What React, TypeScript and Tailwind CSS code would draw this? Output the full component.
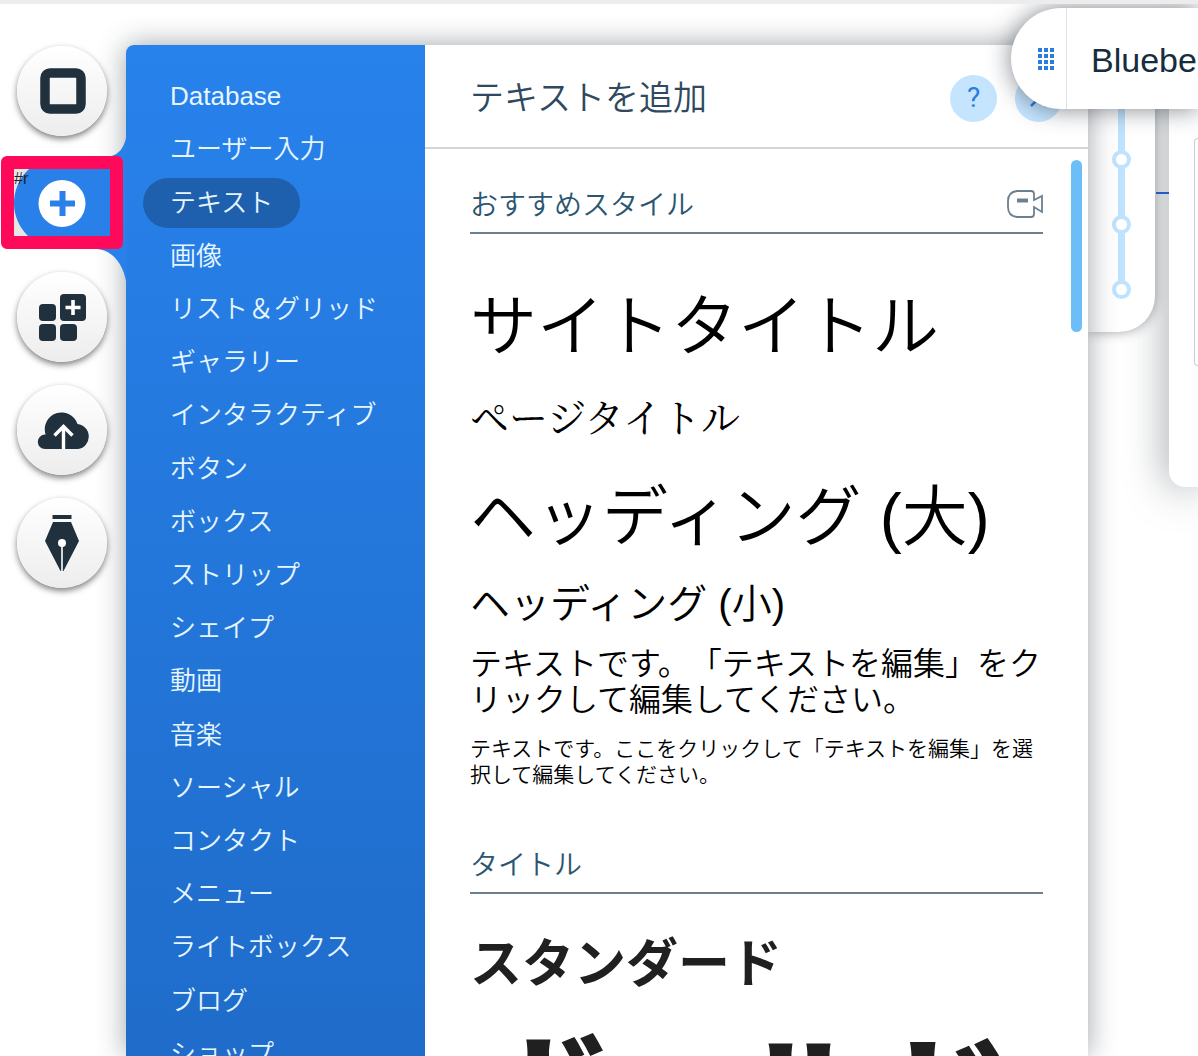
import type { ReactNode } from "react";

const JP = "font-['Liberation_Sans','Noto_Sans_CJK_JP',sans-serif]";

const categories = [
  "Database",
  "ユーザー入力",
  "テキスト",
  "画像",
  "リスト＆グリッド",
  "ギャラリー",
  "インタラクティブ",
  "ボタン",
  "ボックス",
  "ストリップ",
  "シェイプ",
  "動画",
  "音楽",
  "ソーシャル",
  "コンタクト",
  "メニュー",
  "ライトボックス",
  "ブログ",
  "ショップ",
];

function RoundButton({ label, children }: { label: string; children: ReactNode }) {
  return (
    <button
      aria-label={label}
      className="flex size-[90px] shrink-0 items-center justify-center rounded-full bg-linear-to-b from-white to-[#ededed] shadow-[0_3px_6px_rgba(0,0,0,0.5)]"
    >
      {children}
    </button>
  );
}

function Rail() {
  return (
    <nav aria-label="ツール" className="relative z-20 flex w-[126px] shrink-0 flex-col gap-[23px] pt-[46px] pl-[17px]">
      <RoundButton label="背景">
        <svg className="ml-0.5" width="46" height="46" viewBox="0 0 46 46" aria-hidden="true">
          <rect x="5" y="5" width="36" height="36" rx="5" fill="none" stroke="#20303c" strokeWidth="9.500" />
        </svg>
      </RoundButton>

      <button aria-label="追加" className="relative flex size-[90px] shrink-0 items-center justify-center">
        <svg
          className="absolute -top-[29px] -left-[17px]"
          width="127"
          height="168"
          viewBox="0 0 127 168"
          aria-hidden="true"
        >
          <rect x="8" y="36" width="40" height="74" fill="#e6e6e8" />
          <path d="M127 0C126 17 119 27 104 27H60A46 46 0 0 0 60 119H95C113 119 126 136 127 160Z" fill="#2880e8" />
        </svg>
        <svg className="relative" width="48" height="48" viewBox="0 0 48 48" aria-hidden="true">
          <circle cx="24" cy="23.500" r="23.500" fill="#fff" />
          <path d="M24.500 11v25M12 23.500h25" stroke="#2880e8" strokeWidth="6" />
        </svg>
      </button>

      <RoundButton label="アプリ">
        <svg width="48" height="48" viewBox="0 0 48 48" fill="#20303c" aria-hidden="true">
          <rect x="1" y="11" width="17" height="17" rx="4" />
          <rect x="1" y="31" width="17" height="17" rx="4" />
          <rect x="22" y="31" width="17" height="17" rx="4" />
          <rect x="22" y="1" width="26" height="27" rx="4" />
          <path d="M35 7v15M27.500 14.500h15" stroke="#fff" strokeWidth="3.600" />
        </svg>
      </RoundButton>

      <RoundButton label="アップロード">
        <svg className="ml-1" width="54" height="40" viewBox="0 0 54 40" aria-hidden="true">
          <path
            d="M8 39A7.200 7.200 0 0 1 8 24.600H8.600A16.500 16.500 0 0 1 40.500 14A12.600 12.600 0 0 1 41 39Z"
            fill="#20303c"
          />
          <path
            d="M26.500 39V17M17.500 25.500L26.500 16.500L35.500 25.500"
            fill="none"
            stroke="#fff"
            strokeWidth="3.400"
          />
        </svg>
      </RoundButton>

      <RoundButton label="ブログ">
        <svg width="36" height="58" viewBox="0 0 36 58" aria-hidden="true">
          <path d="M8.500 1h19v4h-19zM9 8h18l8 19L19.500 57h-3L1 27Z" fill="#20303c" />
          <circle cx="18" cy="29" r="4" fill="#fff" />
          <path d="M18 29v29" stroke="#fff" strokeWidth="1.600" />
        </svg>
      </RoundButton>

      <div className="absolute top-[156px] left-px z-10 h-[93px] w-[122px] rounded-md border-[13px] border-[#ff0a5b]">
        <span className="block text-base leading-5 text-[#222]">#r</span>
      </div>
    </nav>
  );
}

function CategoryMenu() {
  return (
    <aside className="w-[299px] shrink-0 rounded-tl-lg bg-linear-to-b from-[#2882ec] to-[#1f6cca] px-[17px] pt-[25px]">
      <ul className="grid h-[1011px] auto-rows-fr">
        {categories.map((name) => (
          <li key={name} className="flex items-center">
            <button
              className={
                name === "テキスト"
                  ? "h-[50px] rounded-full bg-[#1f60ae] px-[27px] text-[26px] font-[350] whitespace-nowrap text-[#e6f6ff]"
                  : "h-[50px] rounded-full px-[27px] text-[26px] font-[350] whitespace-nowrap text-[#e6f6ff]"
              }
            >
              {name}
            </button>
          </li>
        ))}
      </ul>
    </aside>
  );
}

function SectionHeading({ title, icon }: { title: string; icon?: ReactNode }) {
  return (
    <div className="flex h-[58px] items-center justify-between border-b-2 border-[#6c8090] text-[#2b5672]">
      <h2 className="pt-1 text-[28px] leading-[54px] font-[350]">{title}</h2>
      {icon}
    </div>
  );
}

function TextPanel() {
  return (
    <section className="relative min-w-0 flex-1 overflow-hidden bg-white">
      <header className="flex h-[104px] items-center justify-between border-b-2 border-[#d3d6d9] pt-1 pr-[26px] pl-[45px]">
        <h1 className="text-[34px] font-[350] text-[#2f4a60]">テキストを追加</h1>
        <div className="flex gap-[18px]">
          <button
            aria-label="ヘルプ"
            className="flex size-[47px] items-center justify-center rounded-full bg-[#c5e5ff] font-['Roboto',sans-serif] text-[28px] text-[#2b7be0]"
          >
            ?
          </button>
          <button aria-label="閉じる" className="flex size-[47px] items-center justify-center rounded-full bg-[#c5e5ff]">
            <svg width="18" height="18" viewBox="0 0 18 18" aria-hidden="true">
              <path d="M1 1L17 17M17 1L1 17" stroke="#2b7be0" strokeWidth="2.500" />
            </svg>
          </button>
        </div>
      </header>

      <div className="pt-[27px] pr-[45px] pl-[45px] text-black">
        <SectionHeading
          title="おすすめスタイル"
          icon={
            <button aria-label="動画を見る">
              <svg
                width="36"
                height="28"
                viewBox="0 0 36 28"
                fill="none"
                stroke="#6c8090"
                strokeWidth="1.800"
                aria-hidden="true"
              >
                <path d="M10 1H24Q27 1 27 4V10L35 6V22L27 17V24Q27 27 24 27H10Q1 26 1 17V11Q1 2 10 1Z" />
                <path d="M10 10.500H21" strokeWidth="4" />
              </svg>
            </button>
          }
        />
        <p className="mt-[53px] text-[67px] leading-[80px] font-[350] whitespace-nowrap">サイトタイトル</p>
        <p className="mt-7 font-['Noto_Serif_CJK_JP','Noto_Sans_CJK_JP',serif] text-[39px] leading-10 whitespace-nowrap">
          ページタイトル
        </p>
        <p className="mt-[42px] text-[66px] leading-[80px] font-[350] whitespace-nowrap">ヘッディング (大)</p>
        <p className="mt-[23px] text-[40px] leading-[48px] font-[350] whitespace-nowrap">ヘッディング (小)</p>
        <p className="mt-[18px] text-[32px] leading-9 font-[350] whitespace-nowrap [text-spacing-trim:space-all]">
          テキストです。「テキストを編集」をク
          <br />
          リックして編集してください。
        </p>
        <p className="mt-[18px] text-[21px] leading-[26px] font-[350] whitespace-nowrap [text-spacing-trim:space-all]">
          テキストです。ここをクリックして「テキストを編集」を選
          <br />
          択して編集してください。
        </p>

        <div className="mt-12">
          <SectionHeading title="タイトル" />
        </div>
        <p className="mt-10 text-[52px] leading-[60px] font-bold whitespace-nowrap text-[#202020]">スタンダード</p>
        <p className="mt-10 text-[135px] leading-[136px] font-black whitespace-nowrap text-[#202020]">ボールド</p>
      </div>

      <div className="absolute top-[115px] right-[6px] h-[172px] w-[11px] rounded-full bg-[#6cbef8]" />
    </section>
  );
}

function ZoomTrack() {
  return (
    <div className="relative z-0 mt-10 h-[292px] w-[67px] shrink-0 rounded-br-[36px] bg-white shadow-[0_0_12px_rgba(40,50,60,0.45)]">
      <div className="absolute top-0 left-[30px] h-[249px] w-[7px] bg-[#bfe3ff]" />
      <div className="relative flex flex-col items-center gap-[46px] pt-[110px]">
        {["大", "中", "小"].map((step) => (
          <button key={step} aria-label={step} className="size-[19px] rounded-full border-4 border-[#bfe3ff] bg-white" />
        ))}
      </div>
    </div>
  );
}

export default function App() {
  return (
    <div className={`relative flex h-screen overflow-hidden border-t-4 border-[#ececec] bg-white ${JP}`}>
      <div className="-mt-1 flex w-full">
        <Rail />
        <main className="z-10 mt-[45px] flex min-w-0 flex-1 rounded-tl-lg shadow-[0_0_28px_rgba(40,50,60,0.45)]">
          <CategoryMenu />
          <TextPanel />
        </main>
        <div className="flex w-[110px] shrink-0 gap-[14px]">
          <ZoomTrack />
          <div className="mt-10 h-[447px] flex-1 rounded-bl-2xl bg-white pt-[98px] pl-[25px] shadow-[0_0_40px_rgba(40,50,60,0.5)]">
            <div className="h-[228px] rounded-l-xl border border-r-0 border-[#c8ccd0]" />
          </div>
          <div className="absolute top-[188px] right-[29px] h-[2px] w-[13px] bg-[#1d5ec0]" />
        </div>
      </div>

      <div className="absolute top-1 right-0 z-30 flex h-[101px] w-[187px] items-center rounded-l-full bg-white shadow-[0_0_24px_rgba(40,50,60,0.6)]">
        <div className="flex h-full w-14 shrink-0 items-center justify-end border-r border-[#dfe3e6] pr-3">
          <svg width="16" height="22" viewBox="0 0 16 22" fill="#2b7be0" aria-hidden="true">
            <path d="M0 0h4v4H0zM6 0h4v4H6zM12 0h4v4h-4zM0 6h4v4H0zM6 6h4v4H6zM12 6h4v4h-4zM0 12h4v4H0zM6 12h4v4H6zM12 12h4v4h-4zM0 18h4v4H0zM6 18h4v4H6zM12 18h4v4h-4z" />
          </svg>
        </div>
        <span className="pt-1 pl-6 text-[34px] whitespace-nowrap text-[#162d3d]">Bluebe</span>
      </div>
    </div>
  );
}
